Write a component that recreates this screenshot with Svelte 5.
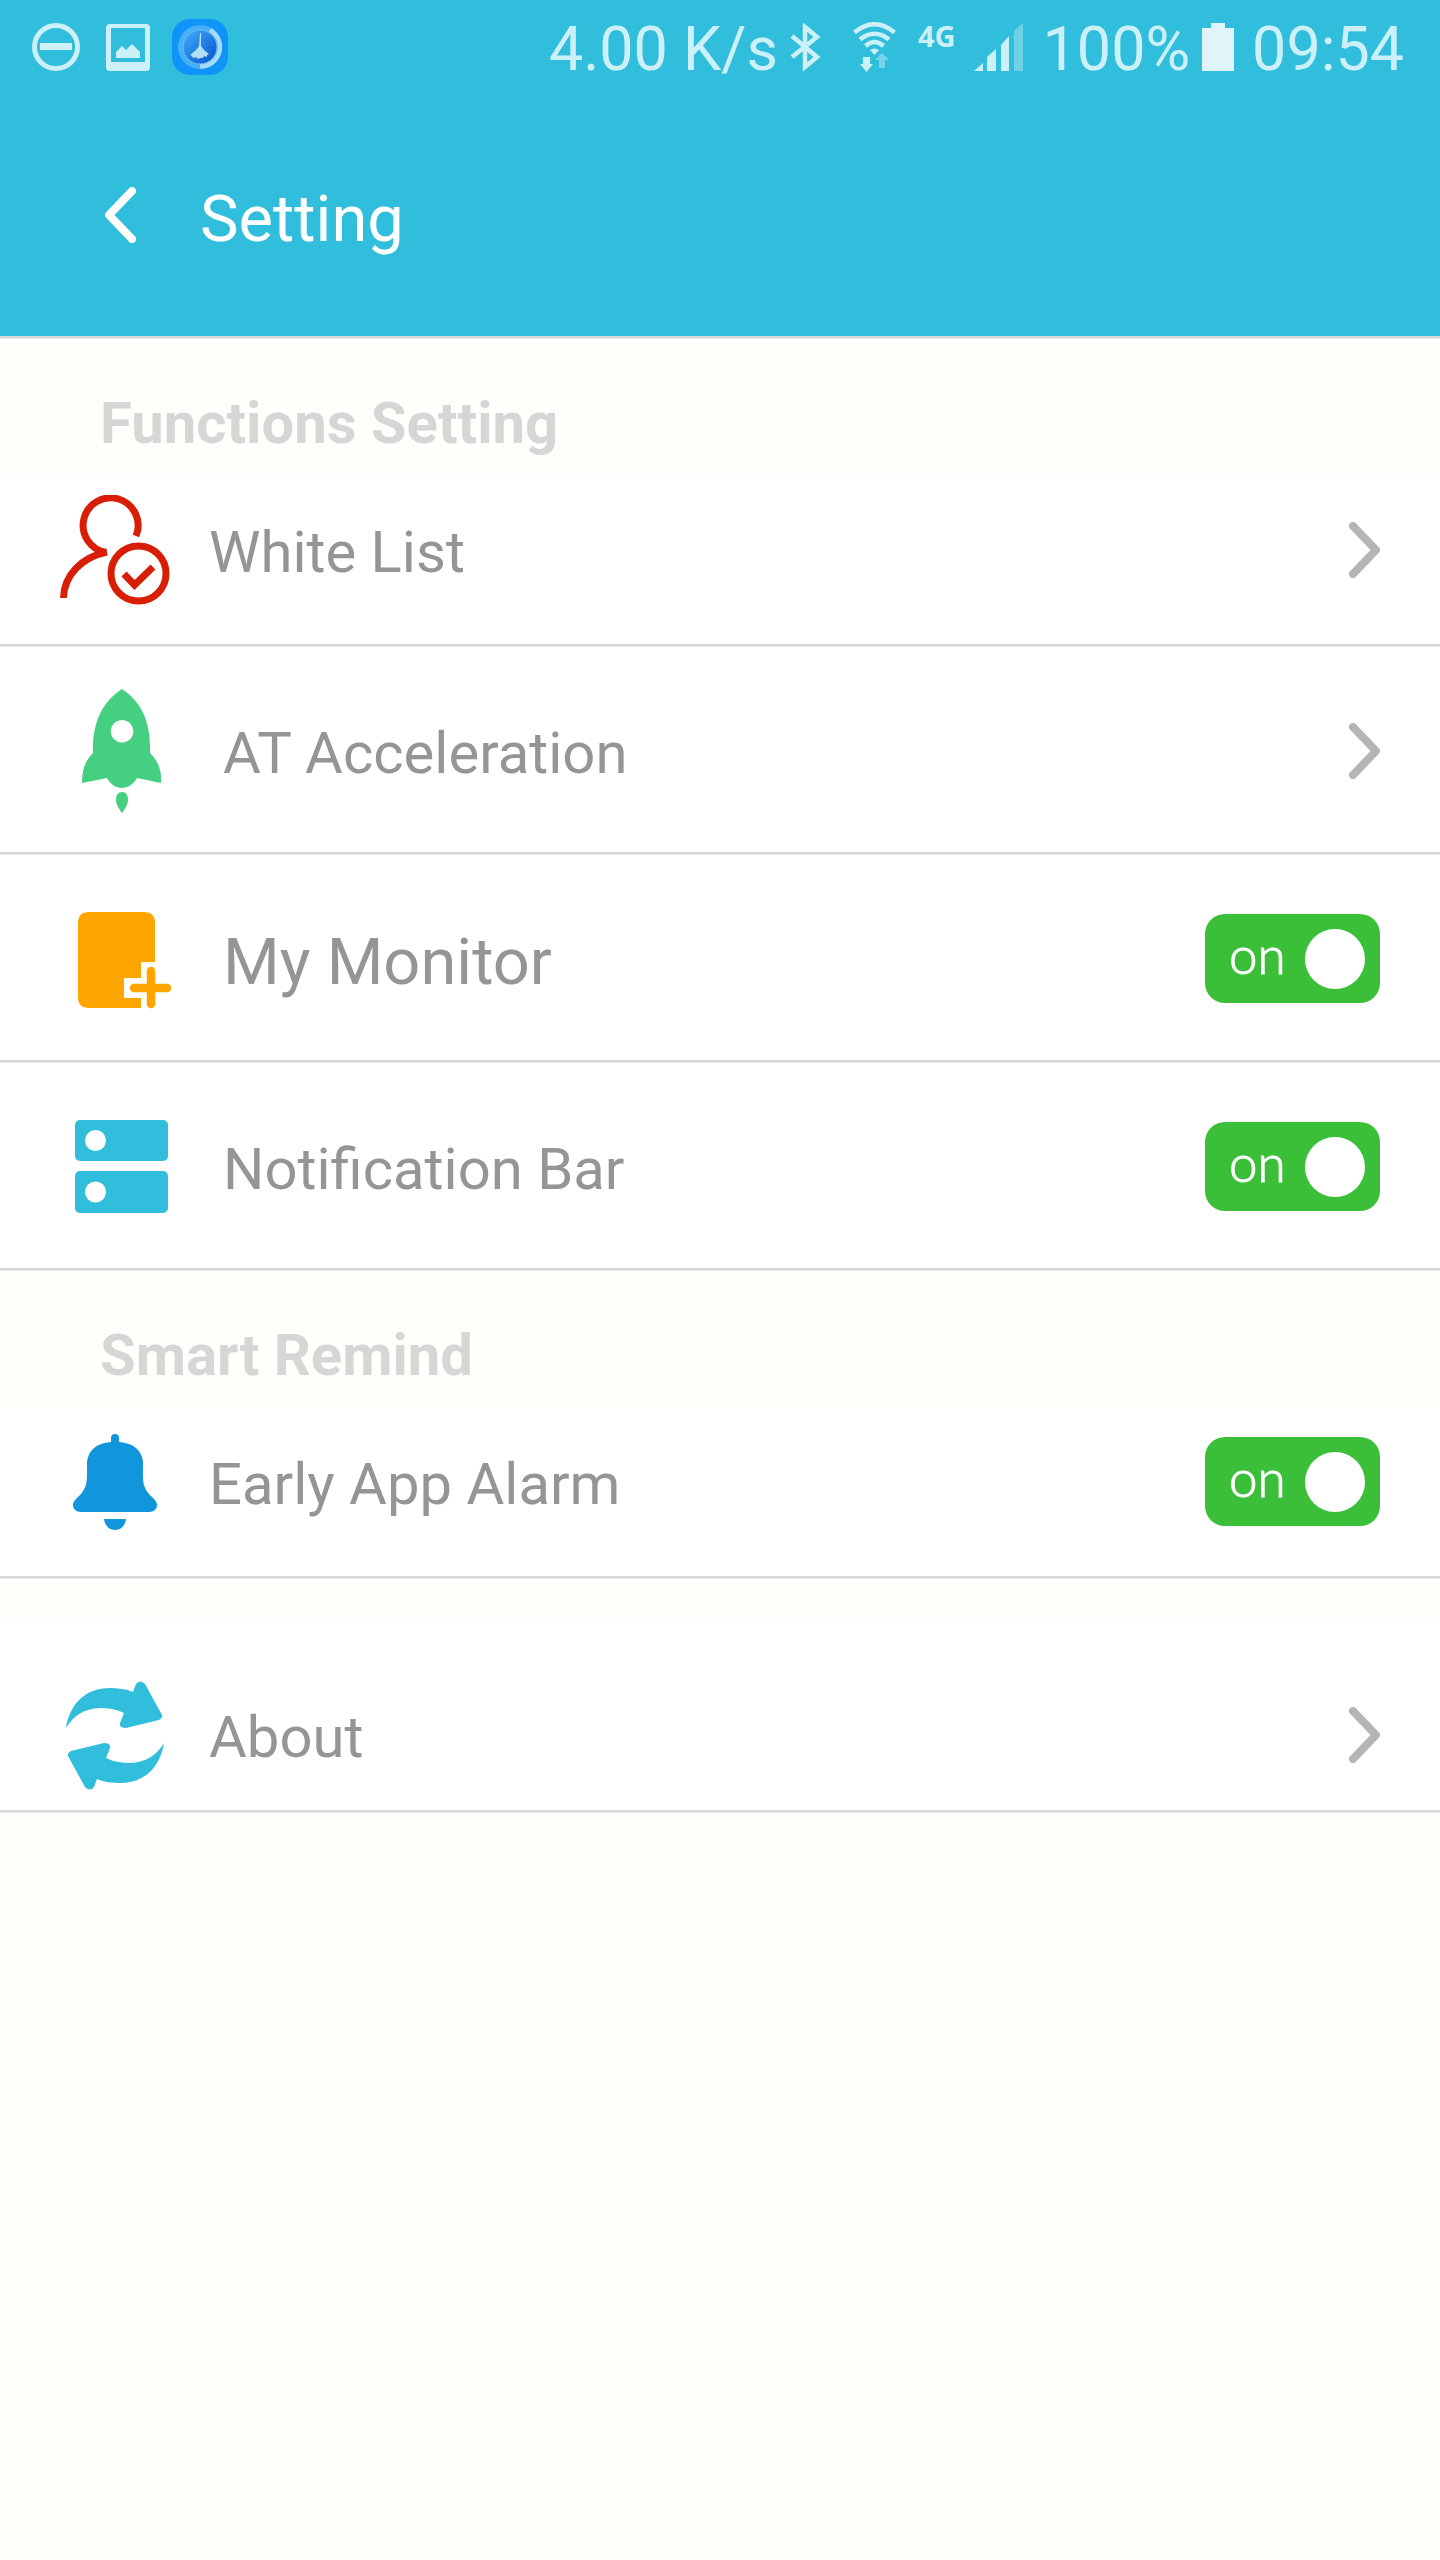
<script>
  let monitor = $state(true);
  let notification = $state(true);
  let alarm = $state(true);
</script>

{#snippet chevron()}
  <svg class="chevron" viewBox="0 0 31 56" aria-hidden="true">
    <path d="M4 4 27 28 4 52" fill="none" stroke="#b5b5b5" stroke-width="8" stroke-linecap="round" stroke-linejoin="round" />
  </svg>
{/snippet}

<div class="screen">
  <header>
    <div class="status">
      <svg class="dnd" viewBox="0 0 48 48" aria-hidden="true">
        <circle cx="24" cy="24" r="21.5" fill="none" stroke="currentColor" stroke-width="5" />
        <path d="M8 20h32v7H8z" fill="currentColor" />
      </svg>
      <svg class="picture" viewBox="0 0 44 47" aria-hidden="true">
        <path fill="currentColor" fill-rule="evenodd" d="M4 0h36q4 0 4 4v39q0 4-4 4H4q-4 0-4-4V4q0-4 4-4zM5 4v34h34V4z" />
        <path fill="currentColor" d="M10 34v-6l6-6 4 4 6-6 8 8v6z" />
      </svg>
      <svg class="cleaner" viewBox="0 0 56 56" aria-hidden="true">
        <defs>
          <linearGradient id="disc" x1="0" y1="0" x2="1" y2="1">
            <stop offset="0.1" stop-color="#3aa6f5" />
            <stop offset="0.9" stop-color="#0b5bd3" />
          </linearGradient>
        </defs>
        <rect width="56" height="56" rx="18" fill="#0f95f9" />
        <circle cx="28" cy="28" r="22" fill="#45aff8" />
        <circle cx="28" cy="28" r="17" fill="url(#disc)" stroke="#6cc0f7" stroke-width="1" />
        <path d="M38 11A19.5 19.5 0 0 1 28 47.5" fill="none" stroke="#a5daf8" stroke-width="4.5" />
        <path d="M28 14h1v13l3 4 5 4-2 1 0 2-3-1-1 2-3 0-2 1-2-2-3 1-1-2-2-1 6-5 3-4z" fill="#b5dff6" />
      </svg>
      <span class="rate">4.00 K/s</span>
      <svg class="bluetooth" viewBox="0 0 32 48" aria-hidden="true">
        <path d="M2 13 27 34 15 44V4l12 10L2 34" fill="none" stroke="currentColor" stroke-width="4.5" />
      </svg>
      <svg class="wifi" viewBox="0 0 43 50" aria-hidden="true">
        <g fill="none" stroke="currentColor" stroke-width="4.5">
          <path d="M1.5 10.5Q21.5-6 41.5 10.5" />
          <path d="M7 17.5Q21.5 6 36 17.5" />
          <path d="M12.5 24Q21.5 16 30.5 24" />
        </g>
        <path d="M17 28q4.5-3 9 0l-4.5 5z" fill="currentColor" />
        <path d="M10 35h7v7h3l-6.500 8L7 42h3z" fill="currentColor" />
        <path d="M26 46v-8h-4l7-7 7 7h-4v8z" fill="currentColor" opacity="0.45" />
      </svg>
      <span class="network">4G</span>
      <svg class="signal" viewBox="0 0 49 48" aria-hidden="true">
        <path fill="currentColor" d="M0 48l9-8v8zM13 48V34l9-8v22zM27 48V22l8-9v35z" />
        <path fill="currentColor" opacity="0.4" d="M40 48V8l9-8v48z" />
      </svg>
      <span class="charge">100%</span>
      <svg class="battery" viewBox="0 0 32 48" aria-hidden="true">
        <path d="M9 0h14v5h9v43H0V5h9z" fill="#e0f5fa" />
      </svg>
      <time datetime="09:54">09:54</time>
    </div>
    <div class="titlebar">
      <button class="back" aria-label="Back">
        <svg viewBox="0 0 31 56" aria-hidden="true">
          <path d="M27 4 4 28l23 24" fill="none" stroke="#fff" stroke-width="8" stroke-linecap="round" stroke-linejoin="round" />
        </svg>
      </button>
      <h1>Setting</h1>
    </div>
  </header>

  <main>
    <h2>Functions Setting</h2>
    <a class="row short" href="#white-list">
      <span class="icon">
        <svg width="110" height="110" viewBox="0 0 110 110" aria-hidden="true">
          <g fill="none" stroke="#d81e06" stroke-width="7">
            <path d="M76 41A27.500 27.500 0 1 0 46 57.500" />
            <path d="M47 57C22 62 4 80 3.500 103" />
            <circle cx="78.500" cy="78.500" r="27.500" />
            <path d="M64 79l10.500 11L93 72" />
          </g>
        </svg>
      </span>
      <span class="name">White List</span>
      {@render chevron()}
    </a>
    <a class="row tall" href="#acceleration">
      <span class="icon">
        <svg width="80" height="124" viewBox="0 0 80 124" aria-hidden="true">
          <path fill="#45cf81" fill-rule="evenodd" d="M40 0C60 13 69 34 68 64 76 72 80 81 79 94L55 89C52 95 46 99 40 99S28 95 25 89L0 94C0 81 3 72 11 64 10 34 20 13 40 0zM40 31a11.300 11.300 0 1 0 .1 0z" />
          <path fill="#45cf81" d="M40 103c4 0 6 3 6 8 0 4-3 9-6 13-3-4-6-9-6-13 0-5 2-8 6-8z" />
        </svg>
      </span>
      <span class="name">AT Acceleration</span>
      {@render chevron()}
    </a>
    <label class="row tall">
      <span class="icon">
        <svg width="100" height="100" viewBox="-6 -3 100 100" aria-hidden="true">
          <path fill="#ffa500" d="M11 0H66Q77 0 77 11V50H63V66H46V86H63V96H11Q0 96 0 85V11Q0 0 11 0z" />
          <path d="M73 59V92M56 76H89" stroke="#ffa500" stroke-width="8.500" stroke-linecap="round" />
        </svg>
      </span>
      <span class="name large">My Monitor</span>
      <span class="toggle">
        <input type="checkbox" bind:checked={monitor} />
        <span class="state">{monitor ? 'on' : 'off'}</span>
      </span>
    </label>
    <label class="row tall">
      <span class="icon">
        <svg width="94" height="93" viewBox="0 0 94 93" aria-hidden="true">
          <rect width="93" height="41" rx="5" fill="#30bedc" />
          <rect y="51" width="93" height="42" rx="5" fill="#30bedc" />
          <circle cx="20.500" cy="20.500" r="10.500" fill="#fff" />
          <circle cx="20.500" cy="72" r="10.500" fill="#fff" />
        </svg>
      </span>
      <span class="name">Notification Bar</span>
      <span class="toggle">
        <input type="checkbox" bind:checked={notification} />
        <span class="state">{notification ? 'on' : 'off'}</span>
      </span>
    </label>

    <h2>Smart Remind</h2>
    <label class="row short">
      <span class="icon">
        <svg width="84" height="96" viewBox="0 0 84 96" aria-hidden="true">
          <path fill="#1296db" d="M38 8V4Q38 0 42 0T46 4V8C61 9 69 17 70 28 70 46 69 51 76 60 80 64 84 67 84 71 84 75 81 78 76 78H8C3 78 0 75 0 71 0 67 4 64 8 60 15 51 14 46 14 28 15 17 23 9 38 8z" />
          <path fill="#1296db" d="M31 85H53C52 92 48 96 42 96S32 92 31 85z" />
        </svg>
      </span>
      <span class="name">Early App Alarm</span>
      <span class="toggle">
        <input type="checkbox" bind:checked={alarm} />
        <span class="state">{alarm ? 'on' : 'off'}</span>
      </span>
    </label>

    <a class="row about" href="#about">
      <span class="icon">
        <svg width="98" height="109" viewBox="0 0 98 109" aria-hidden="true">
          <g fill="#30bedc">
            <path d="M0 47C4 22 20 7 44 7 52 7 60 8 67 11L70 3Q74-2 79 3L96 34Q97 37 93 39L60 47Q53 47 54 42L58 32C50 28 42 27 34 27 18 28 8 34 0 47z" />
            <path transform="rotate(180 49 54.500)" d="M0 47C4 22 20 7 44 7 52 7 60 8 67 11L70 3Q74-2 79 3L96 34Q97 37 93 39L60 47Q53 47 54 42L58 32C50 28 42 27 34 27 18 28 8 34 0 47z" />
          </g>
        </svg>
      </span>
      <span class="name">About</span>
      {@render chevron()}
    </a>
  </main>
</div>

<style>
  :global(body) {
    background: #fffefa;
  }

  .screen {
    min-height: 100vh;
    background: #fffefa;
    font-family: Roboto, 'Liberation Sans', sans-serif;
  }

  svg {
    display: block;
    flex: none;
  }

  header {
    padding-bottom: 3px;
    background: #30bedc;
    box-shadow: inset 0 -1px #ebebea, inset 0 -3px #d7d7d7;
  }

  .status {
    display: flex;
    align-items: center;
    height: 94px;
    padding: 0 36px 0 32px;
    color: #ccf0f7;
    font-size: 61px;
    line-height: 72px;
    white-space: nowrap;
  }

  .rate,
  .charge,
  time {
    padding-top: 4px;
  }

  .dnd {
    width: 48px;
    margin-right: 26px;
  }

  .picture {
    width: 44px;
    margin-right: 22px;
  }

  .cleaner {
    width: 56px;
  }

  .rate {
    margin-left: auto;
  }

  .bluetooth {
    width: 32px;
    margin: 0 31px 0 12px;
  }

  .wifi {
    width: 43px;
    margin-right: 22px;
  }

  .network {
    align-self: flex-start;
    padding-top: 18px;
    font: bold 29px/36px 'Open Sans', sans-serif;
  }

  .signal {
    width: 49px;
    margin: 0 20px 0 18px;
  }

  .battery {
    width: 32px;
    margin: 0 18px 0 12px;
  }

  .titlebar {
    display: flex;
    align-items: center;
    height: 242px;
    padding: 0 60px 0 105px;
  }

  .back {
    padding: 0;
    border: 0;
    background: none;
    cursor: pointer;
  }

  .back svg,
  .chevron {
    width: 31px;
  }

  h1 {
    margin: 0 0 0 64px;
    padding-top: 8px;
    color: #fff;
    font-size: 65px;
    font-weight: 400;
    line-height: 80px;
  }

  h2 {
    margin: 0;
    padding: 50px 100px 18px;
    color: #d6d6d6;
    font-size: 58px;
    font-weight: 700;
    line-height: 68px;
  }

  .row {
    display: flex;
    align-items: center;
    box-sizing: border-box;
    padding: 0 60px 3px;
    background: #fff;
    box-shadow: inset 0 -1px #ebebea, inset 0 -3px #d7d7d7;
    color: #959595;
    text-decoration: none;
    cursor: pointer;
  }

  .short {
    min-height: 172px;
    padding-bottom: 23px;
  }

  .tall {
    min-height: 208px;
    padding-top: 2px;
    padding-left: 67px;
  }

  .about {
    min-height: 192px;
    margin-top: 42px;
    padding-top: 39px;
  }

  .icon {
    display: flex;
    flex: none;
    justify-content: center;
    width: 110px;
  }

  .name {
    flex: 1;
    padding: 4px 0 0 39px;
    font-size: 58px;
    line-height: 68px;
  }

  .tall .name {
    padding-left: 46px;
  }

  .name.large {
    padding-top: 6px;
    font-size: 65px;
  }

  .toggle {
    display: grid;
    flex: none;
    align-items: center;
  }

  .toggle input,
  .state {
    grid-area: 1 / 1;
  }

  .toggle input {
    display: flex;
    align-items: center;
    justify-content: flex-end;
    appearance: none;
    width: 175px;
    height: 89px;
    margin: 0;
    padding: 0 15px;
    border-radius: 20px;
    background: #b5b5b5;
    cursor: pointer;
  }

  .toggle input:not(:checked) {
    justify-content: flex-start;
  }

  .toggle input:not(:checked) + .state {
    justify-self: end;
    padding: 0 20px 8px 0;
  }

  .toggle input:checked {
    background: #3cbf38;
  }

  .toggle input::after {
    content: '';
    width: 60px;
    height: 60px;
    border-radius: 50%;
    background: #fff;
  }

  .state {
    z-index: 1;
    padding: 0 0 8px 24px;
    color: #fff;
    font: 300 51px/60px Lato, sans-serif;
    -webkit-text-stroke: 1px #fff;
    pointer-events: none;
  }
</style>
